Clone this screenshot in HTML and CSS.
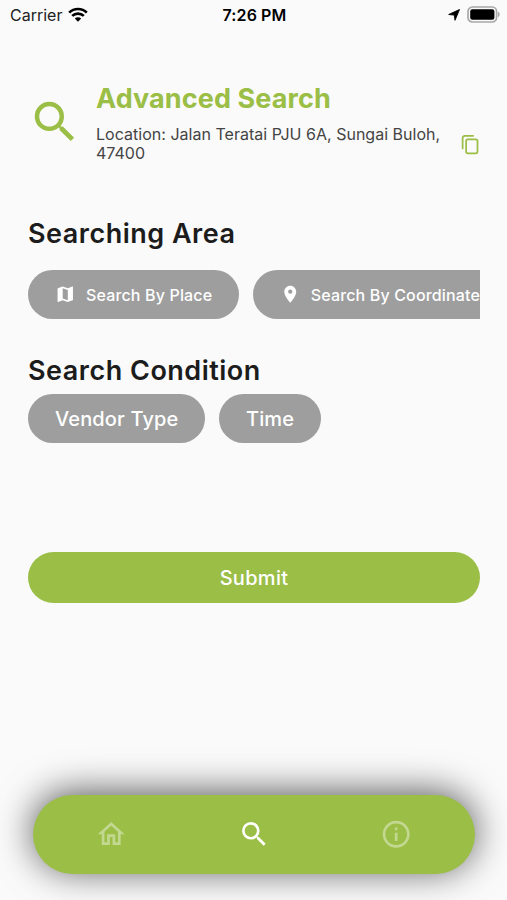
FILE: index.html
```html
<!DOCTYPE html>
<html lang="en">
<head>
  <meta charset="UTF-8" />
  <meta name="viewport" content="width=device-width, initial-scale=1.0" />
  <title>Advanced Search</title>
  <link rel="stylesheet" href="styles.css">
</head>
<body>
  <div class="status-bar">
    <div class="status-left">
      <span class="carrier">Carrier</span>
      <svg class="wifi" viewBox="0 0 20 15">
        <path d="M1.2 5.6a12.6 12.6 0 0 1 17.6 0" />
        <path d="M4.2 8.9a8.3 8.3 0 0 1 11.6 0" />
        <path class="wifi-dot" d="M10 14.8L6.8 11.6a4.6 4.6 0 0 1 6.4 0z" />
      </svg>
    </div>
    <div class="clock">7:26 PM</div>
    <div class="status-right">
      <svg class="arrow" viewBox="0 0 12 12"><path d="M11.5.5L7 11.3L6.3 6.1L.7 5.5z" /></svg>
      <svg class="battery" viewBox="0 0 33 17">
        <rect class="battery-case" x="1" y="1" width="28.6" height="15" rx="4.4" />
        <path class="battery-tip" d="M31 5.8c2.2.8 2.2 4.4 0 5.2z" />
        <rect x="3.2" y="3.2" width="24.2" height="10.6" rx="2.2" />
      </svg>
    </div>
  </div>

  <div class="content">
    <div class="header">
      <svg class="header-icon" viewBox="0 0 24 24"><path d="M15.5 14h-.79l-.28-.27A6.471 6.471 0 0 0 16 9.5 6.5 6.5 0 1 0 9.5 16c1.61 0 3.09-.59 4.23-1.57l.27.28v.79l5 4.99L20.49 19l-4.99-5zm-6 0C7.01 14 5 11.99 5 9.5S7.01 5 9.5 5 14 7.01 14 9.5 11.99 14 9.5 14z" /></svg>
      <div class="header-text">
        <h1>Advanced Search</h1>
        <p>Location: Jalan Teratai PJU 6A, Sungai Buloh, 47400</p>
      </div>
      <svg class="copy-icon" viewBox="0 0 24 24">
        <path d="M3 16.5V4.5A2.5 2.5 0 0 1 5.5 2H15" />
        <rect x="7" y="6" width="13" height="16" rx="2" />
      </svg>
    </div>

    <h2 class="area-title">Searching Area</h2>
    <div class="chips area-chips">
      <button class="chip chip-small">
        <svg viewBox="0 0 24 24"><path d="M20.5 3l-.16.03L15 5.1 9 3 3.36 4.9c-.21.07-.36.25-.36.48V20.5c0 .28.22.5.5.5l.16-.03L9 18.9l6 2.1 5.64-1.9c.21-.07.36-.25.36-.48V3.5c0-.28-.22-.5-.5-.5zM15 19l-6-2.11V5l6 2.11V19z" /></svg>
        <span>Search By Place</span>
      </button>
      <button class="chip chip-small">
        <svg viewBox="0 0 24 24"><path d="M12 2C8.13 2 5 5.13 5 9c0 5.25 7 13 7 13s7-7.75 7-13c0-3.87-3.13-7-7-7zm0 9.5a2.5 2.5 0 0 1 0-5 2.5 2.5 0 0 1 0 5z" /></svg>
        <span>Search By Coordinate</span>
      </button>
    </div>

    <h2 class="condition-title">Search Condition</h2>
    <div class="chips">
      <button class="chip">Vendor Type</button>
      <button class="chip">Time</button>
    </div>

    <button class="submit">Submit</button>
  </div>

  <div class="nav">
    <svg class="nav-icon" viewBox="0 0 24 24"><path d="M12 5.69l5 4.5V18h-2v-6H9v6H7v-7.81l5-4.5M12 3L2 12h3v8h6v-6h2v6h6v-8h3L12 3z" /></svg>
    <svg class="nav-icon active" viewBox="0 0 24 24"><path d="M15.5 14h-.79l-.28-.27A6.471 6.471 0 0 0 16 9.5 6.5 6.5 0 1 0 9.5 16c1.61 0 3.09-.59 4.23-1.57l.27.28v.79l5 4.99L20.49 19l-4.99-5zm-6 0C7.01 14 5 11.99 5 9.5S7.01 5 9.5 5 14 7.01 14 9.5 11.99 14 9.5 14z" /></svg>
    <svg class="nav-icon" viewBox="0 0 24 24"><path d="M11 7h2v2h-2zm0 4h2v6h-2zm1-9C6.48 2 2 6.48 2 12s4.48 10 10 10 10-4.48 10-10S17.52 2 12 2zm0 18c-4.41 0-8-3.59-8-8s3.59-8 8-8 8 3.59 8 8-3.59 8-8 8z" /></svg>
  </div>
</body>
</html>
```
FILE: styles.css
```css
* {
  box-sizing: border-box;
}

body {
  margin: 0;
  height: 900px;
  font-family: Inter, sans-serif;
  background-color: #fafafa;
  color: #1c1c1c;
  display: flex;
  flex-direction: column;
  overflow: hidden;
}

svg {
  display: block;
  flex-shrink: 0;
  fill: currentColor;
}

h1, h2, p {
  margin: 0;
}

.status-bar {
  height: 30px;
  padding: 0 7px 0 10px;
  display: grid;
  grid-template-columns: 1fr auto 1fr;
  align-items: center;
  color: #000;
  font-size: 16px;
}

.status-left,
.status-right {
  display: flex;
  align-items: center;
}

.status-left {
  gap: 6px;
}

.status-right {
  justify-content: flex-end;
  gap: 7px;
  padding-bottom: 2px;
}

.carrier {
  color: #222;
}

.clock {
  padding-right: 1px;
  font-weight: 600;
  letter-spacing: 0.1px;
}

.wifi {
  width: 20px;
  height: 15px;
  margin-bottom: 1px;
  fill: none;
  stroke: #000;
  stroke-width: 2.7;
}

.wifi .wifi-dot {
  fill: #000;
  stroke: none;
}

.arrow {
  width: 12px;
  height: 12px;
  margin-top: 1px;
  stroke: #000;
  stroke-width: 0.9;
  stroke-linejoin: round;
}

.battery {
  width: 33px;
  height: 17px;
}

.battery-case {
  fill: none;
  stroke: #a8a8a8;
  stroke-width: 1.7;
}

.battery-tip {
  fill: #a8a8a8;
}

.content {
  padding: 0 27px 0 28px;
  flex: 1;
}

.header {
  display: flex;
  height: 104px;
  margin-top: 51px;
}

.header-icon {
  width: 54px;
  height: 54px;
  margin-top: 14px;
  color: #9abe46;
}

.header-text {
  padding-left: 14px;
}

.header h1 {
  padding-top: 1px;
  font-size: 27px;
  line-height: 34px;
  font-weight: 700;
  letter-spacing: 0.1px;
  color: #9abe46;
}

.header p {
  margin-top: 9px;
  width: 350px;
  font-size: 16px;
  line-height: 19px;
  letter-spacing: 0.02px;
  color: #444;
}

.copy-icon {
  width: 21px;
  height: 21px;
  margin-top: 52.5px;
  margin-left: 13.5px;
  fill: none;
  stroke: #9abe46;
  stroke-width: 2;
  stroke-linecap: round;
}

h2 {
  font-size: 27px;
  line-height: 34px;
  font-weight: 600;
  letter-spacing: 0.5px;
}

.area-title {
  margin-top: 32px;
}

.chips {
  display: flex;
  gap: 13.5px;
}

.area-chips {
  margin-top: 19px;
  overflow: hidden;
}

.chip {
  display: flex;
  align-items: center;
  flex-shrink: 0;
  height: 49px;
  padding: 0 27px;
  border: none;
  border-radius: 25px;
  background-color: #9e9e9e;
  color: #fff;
  font-family: inherit;
  font-size: 20px;
  font-weight: 500;
  letter-spacing: 0.15px;
}

.chip-small {
  gap: 10.5px;
  font-size: 16px;
}

.chip-small svg {
  width: 20.5px;
  height: 20.5px;
}

.condition-title {
  margin-top: 35px;
  margin-bottom: 6px;
}

.submit {
  display: block;
  width: 100%;
  height: 51px;
  margin-top: 109px;
  border: none;
  border-radius: 26px;
  background-color: #9abe46;
  color: #fff;
  font-family: inherit;
  font-size: 20px;
  font-weight: 500;
  letter-spacing: 0.3px;
}

.nav {
  display: flex;
  justify-content: space-between;
  align-items: center;
  height: 79px;
  margin: 0 32.5px 26.5px 33px;
  padding: 1px 62px 0;
  border-radius: 40px;
  background-color: #9abe46;
  box-shadow: 0 -3px 36px rgba(0, 0, 0, 0.66);
}

.nav-icon {
  width: 32.4px;
  height: 32.4px;
  color: rgba(255, 255, 255, 0.4);
}

.nav-icon.active {
  color: #fff;
}
```
